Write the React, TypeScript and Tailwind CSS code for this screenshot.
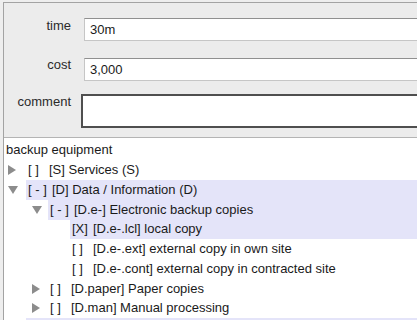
import React from "react";

type Row = {
  tri?: "right" | "down";
  triX?: number;
  boxX: number;
  check?: string;
  label?: string;
  selected?: boolean;
};

const rows: Row[] = [
  { tri: "right", triX: 8, boxX: 26, check: "[ ]", label: "[S] Services (S)" },
  { tri: "down", triX: 8, boxX: 26, check: "[ - ]", label: "[D] Data / Information (D)", selected: true },
  { tri: "down", triX: 32, boxX: 48, check: "[ - ]", label: "[D.e-] Electronic backup copies", selected: true },
  { boxX: 70, check: "[X]", label: "[D.e-.lcl] local copy", selected: true },
  { boxX: 70, check: "[ ]", label: "[D.e-.ext] external copy in own site" },
  { boxX: 70, check: "[ ]", label: "[D.e-.cont] external copy in contracted site" },
  { tri: "right", triX: 32, boxX: 48, check: "[ ]", label: "[D.paper] Paper copies" },
  { tri: "right", triX: 32, boxX: 48, check: "[ ]", label: "[D.man] Manual processing" },
  { boxX: 26, selected: true },
];

function Tri({ dir }: { dir: "right" | "down" }) {
  if (dir === "down") {
    return (
      <svg width="10" height="8" viewBox="0 0 10 8" className="block">
        <polygon points="0,0 10,0 5,8" fill="#8c8c8c" />
      </svg>
    );
  }
  return (
    <svg width="8" height="10" viewBox="0 0 8 10" className="block">
      <polygon points="0,0 8,5 0,10" fill="#8c8c8c" />
    </svg>
  );
}

export default function App() {
  return (
    <div className="w-[417px] h-[320px] overflow-hidden bg-[#eeeeee] font-['Liberation_Sans',Arial,sans-serif] text-[13px] text-[#1a1a1a]">
      <div className="ml-[3px] mt-[2px] h-[318px] border-l border-t border-[#a3a3a3] flex flex-col">
        {/* form */}
        <div className="h-[135px] shrink-0 bg-[#ececec] border-b border-[#b4b4b4] pt-[15px] flex flex-col overflow-hidden">
          <div className="flex items-start">
            <div className="w-[67px] shrink-0 text-right leading-[13px] pt-[1px] text-[#2a2a2a]">time</div>
            <div className="ml-[13px] -mr-[12px] flex-1 h-[23px] bg-white border border-[#c6c6c6] border-t-[#909090] pl-[5px] flex items-center">
              30m
            </div>
          </div>
          <div className="flex items-start mt-[17px]">
            <div className="w-[67px] shrink-0 text-right leading-[13px] text-[#2a2a2a]">cost</div>
            <div className="ml-[13px] -mr-[12px] flex-1 h-[23px] bg-white border border-[#c6c6c6] border-t-[#909090] pl-[5px] flex items-center">
              3,000
            </div>
          </div>
          <div className="flex items-start mt-[13px]">
            <div className="w-[67px] shrink-0 text-right leading-[13px] pt-[1px] text-[#2a2a2a]">comment</div>
            <div className="ml-[10px] -mr-[12px] flex-1 h-[34px] bg-white border-2 border-[#4f4f4f]"></div>
          </div>
        </div>
        {/* tree */}
        <div className="flex-1 bg-white pt-[2.5px] overflow-hidden">
          <div className="h-[19.75px] flex items-center pl-[2px] leading-[16px]">backup equipment</div>
          {rows.map((r, i) => (
            <div key={i} className="h-[19.75px] flex items-stretch leading-[16px]">
              <div className="shrink-0 flex items-center" style={{ width: r.boxX - 4 }}>
                {r.tri && (
                  <div style={{ marginLeft: (r.triX ?? 0) - 4 }}>
                    <Tri dir={r.tri} />
                  </div>
                )}
              </div>
              <div
                className={
                  "flex-1 flex items-center pl-[2px] whitespace-nowrap " +
                  (r.selected ? "bg-[#e4e4f9]" : "")
                }
              >
                {r.check && (
                  <span className={"inline-block " + (r.check === "[ - ]" ? "w-[24px]" : "w-[21px]")}>
                    {r.check}
                  </span>
                )}
                {r.label && <span>{r.label}</span>}
              </div>
            </div>
          ))}
        </div>
      </div>
    </div>
  );
}
